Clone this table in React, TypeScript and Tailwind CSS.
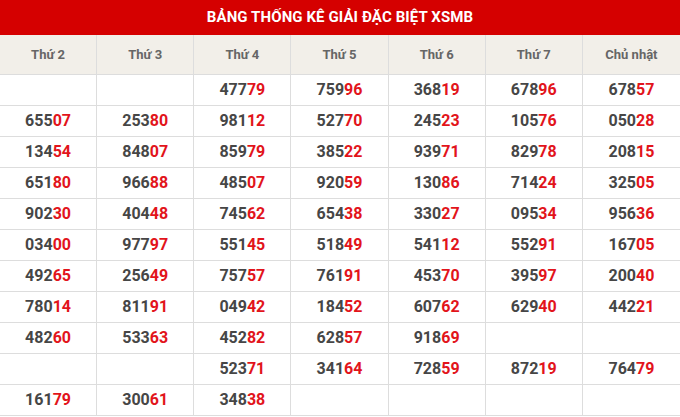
const days = ['Thứ 2', 'Thứ 3', 'Thứ 4', 'Thứ 5', 'Thứ 6', 'Thứ 7', 'Chủ nhật'];

const rows: string[][] = [
  ['', '', '47779', '75996', '36819', '67896', '67857'],
  ['65507', '25380', '98112', '52770', '24523', '10576', '05028'],
  ['13454', '84807', '85979', '38522', '93971', '82978', '20815'],
  ['65180', '96688', '48507', '92059', '13086', '71424', '32505'],
  ['90230', '40448', '74562', '65438', '33027', '09534', '95636'],
  ['03400', '97797', '55145', '51849', '54112', '55291', '16705'],
  ['49265', '25649', '75757', '76191', '45370', '39597', '20040'],
  ['78014', '81191', '04942', '18452', '60762', '62940', '44221'],
  ['48260', '53363', '45282', '62857', '91869', '', ''],
  ['', '', '52371', '34164', '72859', '87219', '76479'],
  ['16179', '30061', '34838', '', '', '', ''],
];

function Num({ value }: { value: string }) {
  if (!value) return null;
  return (
    <span>
      {value.slice(0, 3)}
      <span className="text-[#e2141b]">{value.slice(3)}</span>
    </span>
  );
}

export default function App() {
  return (
    <div className="w-[680px] bg-white font-['Roboto',sans-serif]">
      <div className="flex h-[35px] items-center justify-center bg-[#d50000]">
        <h2 className="text-[15px] font-bold tracking-[0.1px] text-white">
          BẢNG THỐNG KÊ GIẢI ĐẶC BIỆT XSMB
        </h2>
      </div>
      <div className="grid grid-cols-7">
        {days.map((d, i) => (
          <div
            key={d}
            className={`flex h-[40px] items-center justify-center border-b border-[#dddddd] bg-[#f2efe9] text-[13px] font-bold text-[#666666] ${
              i < 6 ? 'border-r' : ''
            }`}
          >
            {d}
          </div>
        ))}
        {rows.map((row, r) =>
          row.map((v, c) => (
            <div
              key={`${r}-${c}`}
              className={`flex h-[31px] items-center justify-center border-b border-[#dddddd] text-[16px] font-bold text-[#464646] ${
                c < 6 ? 'border-r' : ''
              }`}
            >
              <Num value={v} />
            </div>
          ))
        )}
      </div>
    </div>
  );
}
